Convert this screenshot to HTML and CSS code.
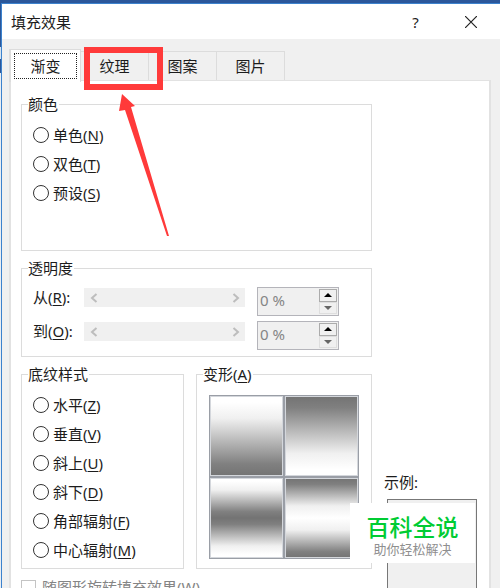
FILE: index.html
```html
<!DOCTYPE html>
<html lang="zh-CN">
<head>
  <meta charset="UTF-8">
  <meta name="viewport" content="width=device-width, initial-scale=1.0">
  <title>填充效果</title>
  <link rel="stylesheet" href="styles.css">
</head>
<body>
  <div class="dialog">
    <header class="title-bar">
      <h1>填充效果</h1>
      <button class="title-btn" type="button" aria-label="Help">?</button>
      <button class="title-btn" type="button" aria-label="Close">
        <svg width="12" height="12" viewBox="0 0 12 12"><path d="M0 0L12 12M12 0L0 12" stroke="#222" stroke-width="1.2"/></svg>
      </button>
    </header>

    <nav class="tabs" role="tablist">
      <button class="tab active" type="button" role="tab" aria-selected="true"><span>渐变</span></button>
      <button class="tab" type="button" role="tab">纹理</button>
      <button class="tab" type="button" role="tab">图案</button>
      <button class="tab" type="button" role="tab">图片</button>
    </nav>

    <main class="panel">
      <div class="options">
        <fieldset class="group colors">
          <legend>颜色</legend>
          <label class="choice"><input type="radio" name="color">单色(<u>N</u>)</label>
          <label class="choice"><input type="radio" name="color">双色(<u>T</u>)</label>
          <label class="choice"><input type="radio" name="color">预设(<u>S</u>)</label>
        </fieldset>

        <fieldset class="group opacity">
          <legend>透明度</legend>
          <div class="opacity-row">
            <label for="from">从(<u>R</u>):</label>
            <div class="scroll">
              <button type="button" disabled aria-label="Less"><svg width="8" height="10" viewBox="0 0 8 10"><path d="M6.5 1L2 5L6.5 9"/></svg></button>
              <input type="range" id="from" value="0" disabled>
              <button type="button" disabled aria-label="More"><svg width="8" height="10" viewBox="0 0 8 10"><path d="M1.5 1L6 5L1.5 9"/></svg></button>
            </div>
            <div class="spinner">
              <input type="text" value="0 %" disabled aria-label="从">
              <div class="steps">
                <button type="button" aria-label="Up"><svg width="8" height="4" viewBox="0 0 8 4"><path d="M0 4L4 0L8 4Z"/></svg></button>
                <button class="down" type="button" aria-label="Down"><svg width="8" height="4" viewBox="0 0 8 4"><path d="M0 0L4 4L8 0Z"/></svg></button>
              </div>
            </div>
          </div>
          <div class="opacity-row">
            <label for="to">到(<u>O</u>):</label>
            <div class="scroll">
              <button type="button" disabled aria-label="Less"><svg width="8" height="10" viewBox="0 0 8 10"><path d="M6.5 1L2 5L6.5 9"/></svg></button>
              <input type="range" id="to" value="0" disabled>
              <button type="button" disabled aria-label="More"><svg width="8" height="10" viewBox="0 0 8 10"><path d="M1.5 1L6 5L1.5 9"/></svg></button>
            </div>
            <div class="spinner">
              <input type="text" value="0 %" disabled aria-label="到">
              <div class="steps">
                <button type="button" aria-label="Up"><svg width="8" height="4" viewBox="0 0 8 4"><path d="M0 4L4 0L8 4Z"/></svg></button>
                <button class="down" type="button" aria-label="Down"><svg width="8" height="4" viewBox="0 0 8 4"><path d="M0 0L4 4L8 0Z"/></svg></button>
              </div>
            </div>
          </div>
        </fieldset>

        <div class="styles-row">
          <fieldset class="group">
            <legend>底纹样式</legend>
            <label class="choice"><input type="radio" name="shade">水平(<u>Z</u>)</label>
            <label class="choice"><input type="radio" name="shade">垂直(<u>V</u>)</label>
            <label class="choice"><input type="radio" name="shade">斜上(<u>U</u>)</label>
            <label class="choice"><input type="radio" name="shade">斜下(<u>D</u>)</label>
            <label class="choice"><input type="radio" name="shade">角部辐射(<u>F</u>)</label>
            <label class="choice"><input type="radio" name="shade">中心辐射(<u>M</u>)</label>
          </fieldset>
          <fieldset class="group variants">
            <legend>变形(<u>A</u>)</legend>
            <div class="variant-grid">
              <button class="variant to-dark" type="button" aria-label="1"></button>
              <button class="variant to-light" type="button" aria-label="2"></button>
              <button class="variant dark-middle" type="button" aria-label="3"></button>
              <button class="variant light-middle" type="button" aria-label="4"></button>
            </div>
          </fieldset>
        </div>

        <label class="rotate"><input type="checkbox" disabled>随图形旋转填充效果(<u>W</u>)</label>
      </div>

      <aside class="sample">
        <p>示例:</p>
        <div class="sample-box">
          <div class="watermark">
            <strong>百科全说</strong>
            <span>助你轻松解决</span>
          </div>
        </div>
      </aside>
    </main>

    <div class="highlight"></div>
    <svg class="arrow" width="52" height="144" viewBox="0 0 52 144"><path d="M5 1L18 13L14 14L52 143L50 143L8 17L2 18Z" fill="#ff3a3a"/></svg>
  </div>
</body>
</html>
```
FILE: styles.css
```css
* {
  box-sizing: border-box;
  margin: 0;
  padding: 0;
}

body {
  height: 100vh;
  overflow: hidden;
  padding: 3px 0 0 1px;
  background: linear-gradient(#2b579a 47px, #d5e3f0 47px, #d5e3f0 59px, #2b579a 59px, #2b579a 73px, #e9eef4 73px);
  color: #1c1c1c;
  font: 15px/20px "Noto Sans", "Noto Sans CJK SC", sans-serif;
}

button,
input {
  font: inherit;
  color: inherit;
}

button {
  border: none;
  background: none;
}

u {
  text-underline-offset: 2px;
}

.dialog {
  position: relative;
  min-height: 100%;
  border-top: 1px solid #3c82cd;
  border-left: 1px solid #3c82cd;
  background: #f0f0f0;
}

/* title bar */
.title-bar {
  display: flex;
  align-items: center;
  height: 35px;
  padding: 0 2px 0 9px;
  background: #fff;
}

.title-bar h1 {
  flex: 1;
  font-size: 15px;
  font-weight: normal;
}

.title-btn {
  display: flex;
  align-items: center;
  justify-content: center;
  width: 55px;
  height: 35px;
}

/* tabs */
.tabs {
  display: flex;
  align-items: flex-end;
  padding: 10px 7px 0;
}

.tab {
  width: 68px;
  height: 29px;
  border: 1px solid #dcdcdc;
  border-width: 1px 1px 0 0;
}

.tab.active {
  position: relative;
  z-index: 1;
  width: 72px;
  height: 33px;
  margin-bottom: -2px;
  padding: 3px;
  border-width: 1px 1px 0 2px;
  background: #fff;
}

.tab.active span {
  display: block;
  border: 1px dotted #222;
  line-height: 24px;
}

/* panel */
.panel {
  display: grid;
  grid-template-columns: minmax(0, 1fr) 93px;
  gap: 12px;
  margin: 0 9px 0 7px;
  padding: 14px 12px 12px 10px;
  border: 2px solid #e2e2e2;
  border-top-width: 1px;
  background: #fff;
}

.options {
  display: flex;
  flex-direction: column;
  gap: 8px;
}

.group {
  min-width: 0;
  padding: 7px 11px 4px;
  border: 1px solid #dcdcdc;
}

.group legend {
  margin-left: -5px;
  padding-right: 1px;
  line-height: 18px;
}

.group.colors {
  padding-bottom: 43px;
}

.choice {
  display: flex;
  align-items: center;
  height: 29px;
}

.choice input {
  appearance: none;
  width: 16px;
  height: 16px;
  margin-right: 4px;
  border: 1px solid #333;
  border-radius: 50%;
  background: #fff;
}

/* transparency */
.group.opacity {
  display: flex;
  flex-direction: column;
  gap: 5px;
  padding: 10px 11px 6px;
}

.opacity-row {
  display: flex;
  align-items: flex-start;
  height: 29px;
}

.opacity-row > label {
  width: 51px;
}

.scroll {
  display: flex;
  flex: 1;
  min-width: 0;
  height: 19px;
  margin: 1px 12px 0 0;
  background: #f0f0f0;
}

.scroll button {
  display: flex;
  align-items: center;
  justify-content: center;
  width: 19px;
}

.scroll path {
  fill: none;
  stroke: #bdbdbd;
  stroke-width: 2;
}

.scroll input {
  appearance: none;
  flex: 1;
  min-width: 0;
  background: none;
}

.scroll input::-webkit-slider-thumb {
  appearance: none;
}

.spinner {
  display: flex;
  width: 82px;
  height: 29px;
  margin-right: 21px;
  padding: 1px;
  border: 1px solid #b4b4ba;
  background: #f0f0f0;
}

.spinner input {
  flex: 1;
  min-width: 0;
  padding: 0 0 4px 1px;
  border: none;
  background: none;
  color: #858585;
}

.steps {
  display: flex;
  flex-direction: column;
  width: 18px;
}

.steps button {
  display: flex;
  flex: 1;
  align-items: center;
  justify-content: center;
  border: 1px solid #ababab;
}

.steps .down {
  border-color: #dedede;
  fill: #666;
}

/* shading styles */
.styles-row {
  display: grid;
  grid-template-columns: 163fr 176fr;
  gap: 12px;
}

.group.variants {
  padding: 12px 12px 8px;
}

.group.variants legend {
  margin-left: -6px;
}

.variant-grid {
  display: grid;
  grid-template-columns: 1fr 1fr;
  grid-auto-rows: 82px;
}

.variant {
  border: 1px solid #9a9ea6;
  box-shadow: inset 0 0 0 1px #d4d7dc;
}

.to-dark {
  background: linear-gradient(#fff 8%, #f0f0f0 28%, #808080 85%, #737373);
}

.to-light {
  background: linear-gradient(#737373, #808080 15%, #f0f0f0 72%, #fff 92%);
}

.dark-middle {
  background: linear-gradient(#fff 4%, #f0f0f0 15%, #808080 42%, #737373 50%, #808080 58%, #f0f0f0 85%, #fff 96%);
}

.light-middle {
  background: linear-gradient(#737373, #808080 8%, #f0f0f0 35%, #fff 50%, #f0f0f0 65%, #808080 92%, #737373);
}

.rotate {
  display: flex;
  align-items: center;
  color: #858585;
}

.rotate input {
  appearance: none;
  width: 15px;
  height: 15px;
  margin-right: 6px;
  border: 1px solid #c4c4c4;
}

/* sample */
.sample {
  display: flex;
  flex-direction: column;
  justify-content: flex-end;
}

.sample-box {
  position: relative;
  height: 98px;
  margin: 7px 0 0 3px;
  border: 1px solid #777;
  background: #f0f0f0;
}

.watermark {
  position: absolute;
  top: 3px;
  right: 1px;
  width: 125px;
  height: 60px;
  padding-top: 12px;
  background: #fff;
  text-align: center;
}

.watermark strong {
  display: block;
  color: #0c3;
  font-size: 23px;
  font-weight: 500;
  line-height: 25px;
}

.watermark span {
  display: block;
  color: #8f8f8f;
  font-size: 13px;
  line-height: 18px;
}

/* callout over the texture tab */
.highlight {
  position: absolute;
  z-index: 2;
  top: 43px;
  left: 82px;
  width: 79px;
  height: 43px;
  border: 6px solid #ff3a3a;
}

.arrow {
  position: absolute;
  top: 89px;
  left: 115px;
}
```
